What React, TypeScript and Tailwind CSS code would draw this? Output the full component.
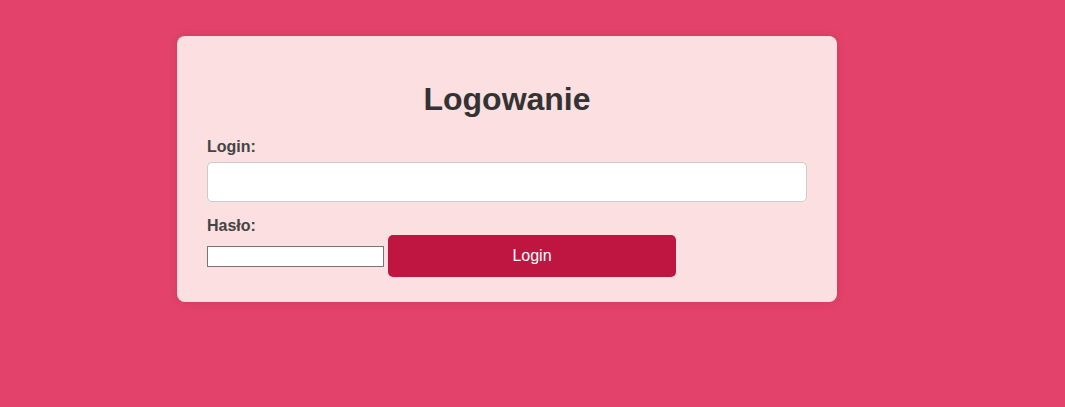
const App = () => {
  return (
    <div className="min-h-[407px] bg-[#e3426a] pt-9 pl-[177px] font-['Liberation_Sans',Arial,sans-serif]">
      <div className="w-[660px] rounded-lg bg-[#fbdfe1] px-[30px] pt-[45px] pb-[25px] shadow-[0_0_10px_rgba(0,0,0,0.1)]">
        <h2 className="text-center text-[32px] font-bold leading-[37px] text-[#333]">
          Logowanie
        </h2>
        <form className="mt-5 flex flex-col">
          <label className="mb-[6px] text-base font-bold leading-[18px] text-[#444]">
            Login:
          </label>
          <input
            type="text"
            className="h-10 w-[600px] rounded-[5px] border border-[#ccc] bg-white px-2.5 outline-none"
          />
          <label className="mt-[15px] text-base font-bold leading-[18px] text-[#444]">
            Hasło:
          </label>
          <div className="flex items-end">
            <input
              type="password"
              className="mb-2.5 h-[21px] w-[177px] border border-[#767676] bg-white px-0.5 text-[13px]"
            />
            <button
              type="button"
              className="ml-1 h-[42px] w-[288px] rounded-[5px] bg-[#be1640] text-base leading-[18px] text-white"
            >
              Login
            </button>
          </div>
        </form>
      </div>
    </div>
  );
};

export default App;
